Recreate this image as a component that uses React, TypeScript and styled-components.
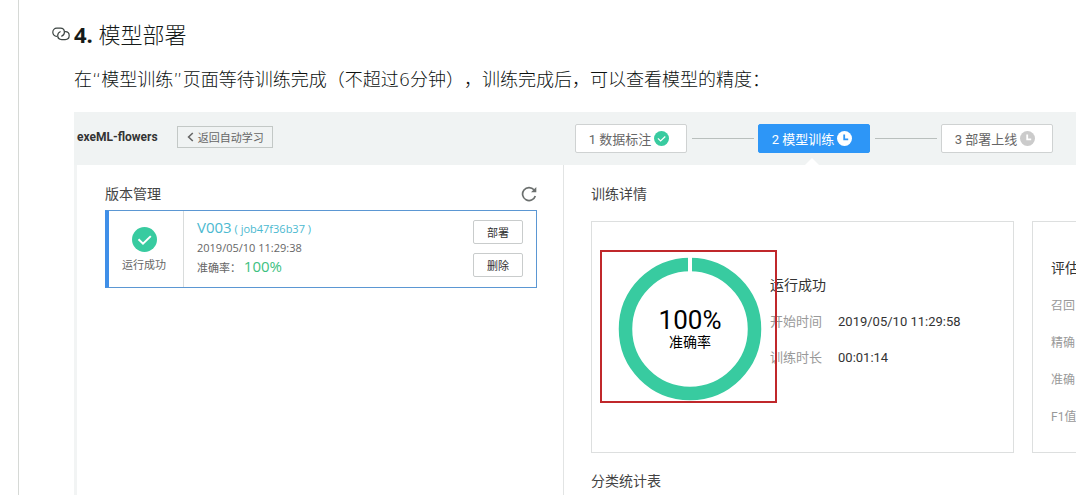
import React from 'react';
import styled, { createGlobalStyle, css } from 'styled-components';

const GlobalStyle = createGlobalStyle`
  *, *::before, *::after { box-sizing: border-box; }
  body {
    margin: 0;
    background: #fff;
    color: #333;
    font-family: Roboto, 'Noto Sans CJK SC', sans-serif;
    font-size: 12px;
  }
  h1, h2, h3, h4, p, dl, dd { margin: 0; font-weight: 400; }
  button { font-family: inherit; margin: 0; padding: 0; }
`;

const Article = styled.main`
  display: flex;
  flex-direction: column;
  min-height: 100vh;
  margin-left: 18px;
  padding: 18px 4px 0 55px;
  border-left: 1px solid #d6d9d6;
`;

const Heading = styled.h1`
  display: flex;
  align-items: center;
  gap: 4px;
  margin-left: -22px;
  font-family: 'Open Sans', 'Noto Sans CJK SC', sans-serif;
  font-size: 22px;
  font-weight: 300;
  line-height: 32px;
  color: #151a19;
  b { font-weight: 700; }
`;

const AnchorLink = styled.a`
  display: flex;
  color: #3c4442;
`;

const Paragraph = styled.p`
  margin: 15px 0 17px;
  font-family: 'DejaVu Sans', 'Noto Sans CJK SC', sans-serif;
  font-size: 18px;
  font-weight: 300;
  line-height: 30px;
  color: #0c1110;
  text-spacing-trim: space-all;
`;

const Console = styled.section`
  display: flex;
  flex: 1;
  flex-direction: column;
`;

const TopBar = styled.header`
  display: flex;
  align-items: center;
  height: 53px;
  padding: 0 23px 0 3px;
  background: #f0f3f3;
`;

const Project = styled.div`
  display: flex;
  align-items: center;
  gap: 19px;
  padding-bottom: 4px;
`;

const ProjectName = styled.h2`
  font-size: 12px;
  font-weight: 700;
  color: #333;
`;

const BackButton = styled.button`
  display: flex;
  align-items: center;
  gap: 4px;
  height: 22px;
  padding: 0 8px 0 9px;
  border: 1px solid #c3c8c6;
  background: transparent;
  color: #666;
  font-size: 11px;
`;

const Steps = styled.nav`
  display: flex;
  align-items: center;
  height: 100%;
  margin-left: auto;
`;

const StepButton = styled.button<{ $active?: boolean }>`
  position: relative;
  display: flex;
  align-items: center;
  justify-content: center;
  gap: 3px;
  width: 112px;
  height: 29px;
  padding-right: 4px;
  border: 1px solid #cfd2d2;
  border-radius: 2px;
  background: #fff;
  color: #666;
  font-size: 13px;
  ${(p) =>
    p.$active &&
    css`
      border-color: #2d96f7;
      background: #2d96f7;
      color: #fff;
      &::after {
        content: '';
        position: absolute;
        top: 33px;
        left: 46px;
        border: 7px solid transparent;
        border-top: 0;
        border-bottom-color: #fff;
      }
    `}
`;

const Connector = styled.span`
  width: 62px;
  height: 1px;
  margin: 0 4px 0 5px;
  background: #b9bfbd;
`;

const Columns = styled.div`
  display: grid;
  flex: 1;
  grid-template-columns: minmax(0, 18fr) minmax(0, 19fr);
  border-left: 3px solid #f2f4f4;
`;

const Versions = styled.section`
  padding: 18px 26px 0 28px;
`;

const Details = styled.section`
  padding: 18px 0 0 27px;
  border-left: 1px solid #e2e4e4;
`;

const SectionHead = styled.div`
  display: flex;
  align-items: center;
  justify-content: space-between;
  height: 22px;
`;

const SectionTitle = styled.h3`
  font-size: 14px;
  line-height: 22px;
  color: #444;
`;

const IconButton = styled.button`
  display: flex;
  border: 0;
  background: none;
  color: #6b6f6e;
`;

const VersionCard = styled.article`
  display: flex;
  height: 78px;
  margin-top: 5px;
  padding-right: 13px;
  border: 1px solid #5b97d3;
  border-left: 4px solid #3f8fe8;
`;

const Status = styled.div`
  display: flex;
  flex-direction: column;
  align-items: center;
  gap: 5px;
  width: 75px;
  padding: 16px 4px 0 0;
  border-right: 1px solid #d9dcdc;
  color: #666;
  font-size: 11px;
  line-height: 18px;
`;

const VersionInfo = styled.div`
  flex: 1;
  padding: 7px 0 0 13px;
  color: #666;
  font-family: 'Open Sans', 'Noto Sans CJK SC', sans-serif;
  font-size: 11px;
  line-height: 19px;
`;

const VersionLink = styled.a`
  color: #4bb9d0;
  text-decoration: none;
`;

const Large = styled.span<{ $green?: boolean }>`
  font-size: 15px;
  ${(p) => p.$green && 'color: #3dc17f;'}
`;

const Actions = styled.div`
  display: flex;
  flex-direction: column;
  gap: 9px;
  padding-top: 9px;
`;

const ActionButton = styled.button`
  width: 50px;
  height: 24px;
  border: 1px solid #c9cccc;
  border-radius: 2px;
  background: #fff;
  color: #333;
  font-size: 11px;
`;

const Cards = styled.div`
  display: grid;
  grid-template-columns: minmax(0, 1fr) 44px;
  gap: 18px;
  margin: 16px 0 17px;
`;

const ResultCard = styled.div`
  position: relative;
  display: flex;
  height: 232px;
  padding: 35px 0 0 26px;
  border: 1px solid #dddfdf;
`;

const Gauge = styled.div`
  display: grid;
  place-items: center;
  width: 144px;
  height: 144px;
  > * { grid-area: 1 / 1; }
`;

const GaugeLabel = styled.div`
  color: #000;
  text-align: center;
  font-size: 14px;
  line-height: 18px;
`;

const GaugeValue = styled.div`
  font-size: 26px;
  line-height: 26px;
`;

const Highlight = styled.div`
  position: absolute;
  top: 28px;
  left: 8px;
  width: 177px;
  height: 153px;
  border: 2px solid #c0282b;
`;

const Facts = styled.div`
  padding: 17px 0 0 8px;
`;

const FactTitle = styled.h4`
  font-size: 14px;
  line-height: 22px;
  color: #333;
`;

const FactRow = styled.dl`
  display: flex;
  gap: 16px;
  margin-top: 16px;
  font-size: 13px;
  line-height: 20px;
  dt { color: #999; }
  dd { color: #333; }
`;

const MetricsCard = styled.div`
  height: 232px;
  padding: 35px 0 0 18px;
  overflow: hidden;
  border: 1px solid #dddfdf;
  border-right: 0;
  white-space: nowrap;
`;

const MetricLabel = styled.p`
  margin-top: 17px;
  color: #999;
  font-size: 12px;
  line-height: 20px;
`;

const CheckBadge = ({ size }: { size: number }) => (
  <svg width={size} height={size} viewBox="0 0 25 25" aria-hidden="true">
    <circle cx="12.5" cy="12.5" r="12.5" fill="#38cba0" />
    <path d="M6.5 12.3l4.5 4.4 7.8-7.6" fill="none" stroke="#fff" strokeWidth="2" />
  </svg>
);

const ClockBadge = ({ face, hands }: { face: string; hands: string }) => (
  <svg width="15" height="15" viewBox="0 0 15 15" aria-hidden="true">
    <circle cx="7.5" cy="7.5" r="7.5" fill={face} />
    <path d="M7.2 3.4v5h4" fill="none" stroke={hands} strokeWidth="1.8" />
  </svg>
);

export default function App() {
  return (
    <>
      <GlobalStyle />
      <Article>
        <Heading>
          <AnchorLink href="#deploy" aria-label="模型部署">
            <svg width="18" height="14" viewBox="0 0 18 14" fill="none" stroke="currentColor" strokeWidth="1.2" strokeLinecap="round" aria-hidden="true">
              <path d="M4.6 9.300C2.500 9.300.8 7.600.8 5.300S2.500 1.200 4.800 1.200h3.600c2.300 0 4 1.700 4 4 0 1.900-1.100 3.300-2.700 3.900" />
              <path d="M13.300 4.600c2.200 0 3.900 1.700 3.900 4s-1.700 4-4 4H9.700c-2.300 0-4-1.700-4-4 0-1.800 1-3.200 2.500-3.800" />
            </svg>
          </AnchorLink>
          <span><b>4.</b> 模型部署</span>
        </Heading>
        <Paragraph>在“模型训练”页面等待训练完成（不超过6分钟），训练完成后，可以查看模型的精度：</Paragraph>

        <Console>
          <TopBar>
            <Project>
              <ProjectName>exeML-flowers</ProjectName>
              <BackButton type="button">
                <svg width="7" height="10" viewBox="0 0 7 10" fill="none" stroke="currentColor" strokeWidth="1.6" aria-hidden="true">
                  <path d="M5.800 1L1.600 5l4.200 4" />
                </svg>
                返回自动学习
              </BackButton>
            </Project>
            <Steps>
              <StepButton type="button">1 数据标注<CheckBadge size={15} /></StepButton>
              <Connector />
              <StepButton type="button" $active>2 模型训练<ClockBadge face="#fff" hands="#2d96f7" /></StepButton>
              <Connector />
              <StepButton type="button">3 部署上线<ClockBadge face="#cbcbcb" hands="#fff" /></StepButton>
            </Steps>
          </TopBar>

          <Columns>
            <Versions>
              <SectionHead>
                <SectionTitle>版本管理</SectionTitle>
                <IconButton type="button" aria-label="刷新">
                  <svg width="16" height="16" viewBox="0 0 16 16" fill="none" aria-hidden="true">
                    <path d="M13 3.800A6.500 6.500 0 1 0 14.300 10" stroke="currentColor" strokeWidth="1.700" />
                    <path d="M15.300 1v5.200H10z" fill="currentColor" />
                  </svg>
                </IconButton>
              </SectionHead>
              <VersionCard>
                <Status>
                  <CheckBadge size={25} />
                  运行成功
                </Status>
                <VersionInfo>
                  <div><VersionLink href="#v003"><Large>V003</Large> ( job47f36b37 )</VersionLink></div>
                  <div>2019/05/10 11:29:38</div>
                  <div>准确率： <Large $green>100%</Large></div>
                </VersionInfo>
                <Actions>
                  <ActionButton type="button">部署</ActionButton>
                  <ActionButton type="button">删除</ActionButton>
                </Actions>
              </VersionCard>
            </Versions>

            <Details>
              <SectionTitle>训练详情</SectionTitle>
              <Cards>
                <ResultCard>
                  <Gauge>
                    <svg width="144" height="144" viewBox="0 0 144 144" aria-hidden="true">
                      <circle cx="72" cy="72" r="64.500" fill="none" stroke="#38cba0" strokeWidth="13.500" />
                      <path d="M72 0v16" stroke="#fff" strokeWidth="4" />
                    </svg>
                    <GaugeLabel>
                      <GaugeValue>100%</GaugeValue>
                      准确率
                    </GaugeLabel>
                  </Gauge>
                  <Facts>
                    <FactTitle>运行成功</FactTitle>
                    <FactRow><dt>开始时间</dt><dd>2019/05/10 11:29:58</dd></FactRow>
                    <FactRow><dt>训练时长</dt><dd>00:01:14</dd></FactRow>
                  </Facts>
                  <Highlight />
                </ResultCard>
                <MetricsCard>
                  <FactTitle>评估</FactTitle>
                  <MetricLabel>召回</MetricLabel>
                  <MetricLabel>精确</MetricLabel>
                  <MetricLabel>准确</MetricLabel>
                  <MetricLabel>F1值</MetricLabel>
                </MetricsCard>
              </Cards>
              <SectionTitle>分类统计表</SectionTitle>
            </Details>
          </Columns>
        </Console>
      </Article>
    </>
  );
}
